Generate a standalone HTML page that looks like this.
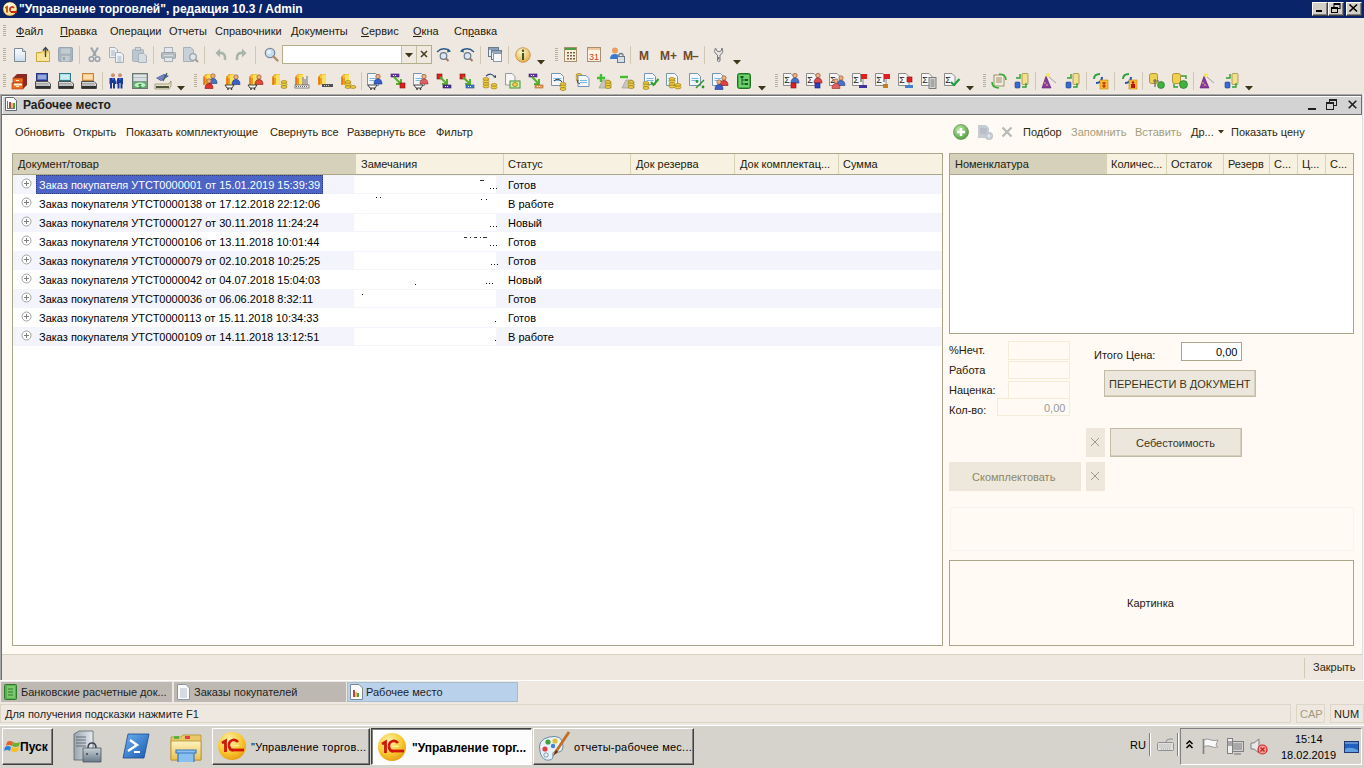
<!DOCTYPE html><html><head><meta charset="utf-8"><style>
html,body{margin:0;padding:0;width:1364px;height:768px;overflow:hidden;background:#efe8e0;}
body{position:relative;font-family:"Liberation Sans",sans-serif;font-size:11px;}
div{position:absolute;box-sizing:border-box;}
.t{white-space:nowrap;}
svg{position:absolute;overflow:visible;}
</style></head><body>
<div style="left:0px;top:0px;width:1364px;height:18px;background:#0a246a"></div>
<svg style="left:1px;top:1px" width="17" height="16" viewBox="0 0 17 16"><defs><radialGradient id="tl" cx="0.45" cy="0.25" r="0.8"><stop offset="0" stop-color="#fffbe8"/><stop offset="0.6" stop-color="#fbe7a0"/><stop offset="1" stop-color="#f2c860"/></radialGradient></defs><circle cx="9" cy="8" r="7.3" fill="url(#tl)" stroke="#0a1030" stroke-width="0.8"/><path d="M4.3 7 L6 6 V11.5" fill="none" stroke="#b84c10" stroke-width="1.8"/><path d="M13 7 Q12 5.5 10.5 6 Q8.5 7 9 9.5 Q9.5 11 11 11" fill="none" stroke="#d22a10" stroke-width="1.7"/><path d="M10 11 H15.8" stroke="#d0200c" stroke-width="1.9"/></svg>
<div class="t" style="left:19px;top:2px;font-size:12px;line-height:14px;color:#ffffff;font-weight:bold;">"Управление торговлей", редакция 10.3 / Admin</div>
<div style="left:1312px;top:2px;width:16px;height:14px;background:#d4d0c8;border-top:1px solid #fff;border-left:1px solid #fff;border-right:1px solid #404040;border-bottom:1px solid #404040;box-shadow:inset -1px -1px 0 #808080"></div>
<div style="left:1316px;top:10px;width:6px;height:2px;background:#000"></div>
<div style="left:1328px;top:2px;width:16px;height:14px;background:#d4d0c8;border-top:1px solid #fff;border-left:1px solid #fff;border-right:1px solid #404040;border-bottom:1px solid #404040;box-shadow:inset -1px -1px 0 #808080"></div>
<svg style="left:1331px;top:3px" width="10" height="10" viewBox="0 0 10 10"><rect x="3" y="0.5" width="6" height="5" fill="none" stroke="#000"/><rect x="3" y="0" width="6" height="2" fill="#000"/><rect x="0.5" y="4.5" width="6" height="5" fill="#d4d0c8" stroke="#000"/><rect x="0" y="4" width="7" height="2" fill="#000"/></svg>
<div style="left:1346px;top:2px;width:16px;height:14px;background:#d4d0c8;border-top:1px solid #fff;border-left:1px solid #fff;border-right:1px solid #404040;border-bottom:1px solid #404040;box-shadow:inset -1px -1px 0 #808080"></div>
<svg style="left:1349px;top:4px" width="9" height="8" viewBox="0 0 9 8"><path d="M0.5 0.5 L8 7.5 M8 0.5 L0.5 7.5" stroke="#000" stroke-width="1.7"/></svg>
<div style="left:3px;top:25px;width:3px;height:1px;background:#b5ae98"></div>
<div style="left:3px;top:27px;width:3px;height:1px;background:#b5ae98"></div>
<div style="left:3px;top:29px;width:3px;height:1px;background:#b5ae98"></div>
<div style="left:3px;top:31px;width:3px;height:1px;background:#b5ae98"></div>
<div style="left:3px;top:33px;width:3px;height:1px;background:#b5ae98"></div>
<div style="left:3px;top:35px;width:3px;height:1px;background:#b5ae98"></div>
<div class="t" style="left:16px;top:25px;font-size:11px;line-height:13px;color:#24200e;"><u>Ф</u>айл</div>
<div class="t" style="left:60px;top:25px;font-size:11px;line-height:13px;color:#24200e;"><u>П</u>равка</div>
<div class="t" style="left:110px;top:25px;font-size:11px;line-height:13px;color:#24200e;">Операции</div>
<div class="t" style="left:169px;top:25px;font-size:11px;line-height:13px;color:#24200e;">Отчеты</div>
<div class="t" style="left:215px;top:25px;font-size:11px;line-height:13px;color:#24200e;">Справочники</div>
<div class="t" style="left:291px;top:25px;font-size:11px;line-height:13px;color:#24200e;">Документы</div>
<div class="t" style="left:361px;top:25px;font-size:11px;line-height:13px;color:#24200e;"><u>С</u>ервис</div>
<div class="t" style="left:413px;top:25px;font-size:11px;line-height:13px;color:#24200e;"><u>О</u>кна</div>
<div class="t" style="left:454px;top:25px;font-size:11px;line-height:13px;color:#24200e;">Сп<u>р</u>авка</div>
<div style="left:3px;top:48px;width:3px;height:1px;background:#b9b29c"></div>
<div style="left:3px;top:50px;width:3px;height:1px;background:#b9b29c"></div>
<div style="left:3px;top:52px;width:3px;height:1px;background:#b9b29c"></div>
<div style="left:3px;top:54px;width:3px;height:1px;background:#b9b29c"></div>
<div style="left:3px;top:56px;width:3px;height:1px;background:#b9b29c"></div>
<div style="left:3px;top:58px;width:3px;height:1px;background:#b9b29c"></div>
<div style="left:3px;top:60px;width:3px;height:1px;background:#b9b29c"></div>
<svg style="left:14px;top:47px" width="16" height="16" viewBox="0 0 16 16"><defs><linearGradient id="nd" x1="0" y1="0" x2="0" y2="1"><stop offset="0" stop-color="#ffffff"/><stop offset="1" stop-color="#c8dcec"/></linearGradient></defs><path d="M0.5 1.5 H8.5 L11.5 4.5 V14.5 H0.5 Z" fill="url(#nd)" stroke="#7c8a96"/><path d="M8.5 1.5 V4.5 H11.5" fill="#dde4ea" stroke="#7c8a96"/></svg>
<svg style="left:36px;top:47px" width="16" height="16" viewBox="0 0 16 16"><path d="M0.5 5.5 H5 L6.5 4 H13.5 V14.5 H0.5 Z" fill="#f3d97a" stroke="#c9a640"/><rect x="1" y="7" width="12" height="7" fill="#f8e59a"/><path d="M9.5 1 V10" stroke="#3c4850" stroke-width="1.4"/><path d="M7 3.5 L9.5 0.5 L12 3.5" fill="none" stroke="#3c4850" stroke-width="1.4"/></svg>
<svg style="left:58px;top:47px" width="16" height="16" viewBox="0 0 16 16"><rect x="0.5" y="0.5" width="14" height="14" rx="1" fill="#a8b4be" stroke="#98a4ae"/><rect x="3" y="1.5" width="9" height="5" fill="#c4ccd2"/><rect x="3.5" y="9" width="8" height="5.5" fill="#c4ccd2"/><rect x="5" y="10" width="2" height="3" fill="#98a4ae"/></svg>
<div style="left:79px;top:46px;width:1px;height:18px;background:#cfc8b4"></div>
<svg style="left:88px;top:47px" width="16" height="16" viewBox="0 0 16 16"><path d="M3 0.5 L8 9 M10 0.5 L5 9" stroke="#9aa4ae" stroke-width="2"/><circle cx="3.5" cy="12" r="2.3" fill="none" stroke="#9aa4ae" stroke-width="1.6"/><circle cx="9.5" cy="12" r="2.3" fill="none" stroke="#9aa4ae" stroke-width="1.6"/></svg>
<svg style="left:109px;top:47px" width="16" height="16" viewBox="0 0 16 16"><path d="M0.5 0.5 H6 L8.5 3 V10.5 H0.5 Z" fill="#eef2f6" stroke="#a4aeb8"/><path d="M6.5 5.5 H12 L14.5 8 V15.5 H6.5 Z" fill="#eef2f6" stroke="#a4aeb8"/><path d="M2 4 H6 M2 6 H6 M2 8 H6 M8.5 10 H12.5 M8.5 12 H12.5 M8.5 14 H12.5" stroke="#a4b4c4"/></svg>
<svg style="left:132px;top:47px" width="16" height="16" viewBox="0 0 16 16"><rect x="0.5" y="2.5" width="11" height="12" rx="1" fill="#bcc6ce" stroke="#a8b2ba"/><rect x="3.5" y="0.5" width="5" height="3" fill="#d0d6dc" stroke="#a8b2ba"/><path d="M6.5 6.5 H12 L14.5 9 V15.5 H6.5 Z" fill="#d6dde2" stroke="#a8b2ba"/></svg>
<div style="left:153px;top:46px;width:1px;height:18px;background:#cfc8b4"></div>
<svg style="left:161px;top:47px" width="16" height="16" viewBox="0 0 16 16"><rect x="3.5" y="0.5" width="8" height="5" fill="#e4e8ec" stroke="#a8b0b8"/><rect x="0.5" y="5.5" width="14" height="6" rx="1" fill="#b4bcc4" stroke="#9aa2aa"/><rect x="3.5" y="10.5" width="8" height="4" fill="#e4e8ec" stroke="#a8b0b8"/><rect x="3" y="8" width="9" height="1" fill="#d8dde2"/></svg>
<svg style="left:183px;top:47px" width="16" height="16" viewBox="0 0 16 16"><path d="M0.5 0.5 H8 L10.5 3 V14.5 H0.5 Z" fill="#c8d0d8" stroke="#a8b0b8"/><circle cx="10" cy="10" r="3.3" fill="#dfe5ea" stroke="#9aa4ae" stroke-width="1.3"/><path d="M12.5 12.5 L15 15" stroke="#a89a86" stroke-width="2"/></svg>
<div style="left:204px;top:46px;width:1px;height:18px;background:#cfc8b4"></div>
<svg style="left:215px;top:47px" width="12" height="16" viewBox="0 0 12 16"><path d="M10 13 Q11 5 4 6" fill="none" stroke="#a8b4a8" stroke-width="2.6"/><path d="M0.5 6 L5 1.5 V10.5 Z" fill="#a8b4a8"/></svg>
<svg style="left:235px;top:47px" width="12" height="16" viewBox="0 0 12 16"><path d="M2 13 Q1 5 8 6" fill="none" stroke="#a8b4a8" stroke-width="2.6"/><path d="M11.5 6 L7 1.5 V10.5 Z" fill="#a8b4a8"/></svg>
<div style="left:255px;top:46px;width:1px;height:18px;background:#cfc8b4"></div>
<svg style="left:264px;top:47px" width="16" height="16" viewBox="0 0 16 16"><circle cx="6" cy="6" r="4.7" fill="#c8dcf0" stroke="#7a8a9a" stroke-width="1.3"/><circle cx="5" cy="5" r="2" fill="#e8f2fc"/><path d="M9.5 9.5 L13.5 13.5" stroke="#b08a6a" stroke-width="2.4" stroke-linecap="round"/></svg>
<div style="left:282px;top:45px;width:150px;height:19px;background:#ffffff;border:1px solid #b5ae8a"></div>
<div style="left:401px;top:46px;width:30px;height:17px;background:#efe9df"></div>
<div style="left:401px;top:46px;width:1px;height:17px;background:#c6bfa4"></div>
<div style="left:416px;top:46px;width:1px;height:17px;background:#c6bfa4"></div>
<svg style="left:405px;top:53px" width="8" height="5" viewBox="0 0 8 5"><path d="M0 0 H8 L4 4.5 Z" fill="#3e3418"/></svg>
<svg style="left:420px;top:50px" width="8" height="8" viewBox="0 0 8 8"><path d="M1 1 L7 7 M7 1 L1 7" stroke="#4a4020" stroke-width="1.6"/></svg>
<svg style="left:436px;top:47px" width="16" height="16" viewBox="0 0 16 16"><path d="M1 5 Q7 -1 14 4" fill="none" stroke="#2a5a8a" stroke-width="1.3"/><path d="M12 1.5 L15 4.5 L11 5.5 Z" fill="#2a5a8a"/><circle cx="7.5" cy="9" r="3.3" fill="#d8e6f2" stroke="#6a7a88" stroke-width="1.2"/><path d="M10 11.5 L12.5 14" stroke="#a07860" stroke-width="2"/></svg>
<svg style="left:459px;top:47px" width="16" height="16" viewBox="0 0 16 16"><path d="M15 5 Q9 -1 2 4" fill="none" stroke="#2a5a8a" stroke-width="1.3"/><path d="M4 1.5 L1 4.5 L5 5.5 Z" fill="#2a5a8a"/><circle cx="8.5" cy="9" r="3.3" fill="#d8e6f2" stroke="#6a7a88" stroke-width="1.2"/><path d="M11 11.5 L13.5 14" stroke="#a07860" stroke-width="2"/></svg>
<div style="left:480px;top:46px;width:1px;height:18px;background:#cfc8b4"></div>
<svg style="left:488px;top:47px" width="16" height="16" viewBox="0 0 16 16"><rect x="0.5" y="0.5" width="10" height="9" fill="#e8eef4" stroke="#6a7a8a"/><rect x="1" y="1" width="9" height="2" fill="#8aa0b8"/><rect x="3.5" y="3.5" width="10" height="9" fill="#eef2f6" stroke="#6a7a8a"/><rect x="4" y="4" width="9" height="2" fill="#94a8bc"/><rect x="5.5" y="6.5" width="8" height="8" fill="#f6f8fa" stroke="#8a9aaa"/></svg>
<div style="left:508px;top:46px;width:1px;height:18px;background:#cfc8b4"></div>
<svg style="left:515px;top:47px" width="16" height="16" viewBox="0 0 16 16"><defs><radialGradient id="ig" cx="0.4" cy="0.3" r="0.8"><stop offset="0" stop-color="#fff6cc"/><stop offset="1" stop-color="#e0a840"/></radialGradient></defs><circle cx="8" cy="8" r="7.3" fill="url(#ig)" stroke="#c08a3a" stroke-width="0.8"/><rect x="7" y="6" width="2" height="7" fill="#3a5a20"/><circle cx="8" cy="3.8" r="1.2" fill="#3a5a20"/></svg>
<svg style="left:537px;top:60px" width="8" height="5" viewBox="0 0 8 5"><path d="M0 0 H8 L4 4.5 Z" fill="#3e3418"/></svg>
<div style="left:555px;top:48px;width:3px;height:1px;background:#b9b29c"></div>
<div style="left:555px;top:50px;width:3px;height:1px;background:#b9b29c"></div>
<div style="left:555px;top:52px;width:3px;height:1px;background:#b9b29c"></div>
<div style="left:555px;top:54px;width:3px;height:1px;background:#b9b29c"></div>
<div style="left:555px;top:56px;width:3px;height:1px;background:#b9b29c"></div>
<div style="left:555px;top:58px;width:3px;height:1px;background:#b9b29c"></div>
<div style="left:555px;top:60px;width:3px;height:1px;background:#b9b29c"></div>
<svg style="left:564px;top:47px" width="16" height="16" viewBox="0 0 16 16"><rect x="0.5" y="0.5" width="12" height="14" fill="#f8f0dc" stroke="#a89070"/><rect x="1" y="1" width="11" height="2" fill="#4aa040"/><g fill="#7a6040"><rect x="3" y="5" width="2" height="1.5"/><rect x="6" y="5" width="2" height="1.5"/><rect x="9" y="5" width="2" height="1.5"/><rect x="3" y="8" width="2" height="1.5"/><rect x="6" y="8" width="2" height="1.5"/><rect x="9" y="8" width="2" height="1.5"/><rect x="3" y="11" width="2" height="1.5"/><rect x="6" y="11" width="2" height="1.5"/><rect x="9" y="11" width="2" height="1.5"/></g></svg>
<svg style="left:587px;top:47px" width="16" height="16" viewBox="0 0 16 16"><rect x="0.5" y="0.5" width="13" height="14" fill="#fbf4e6" stroke="#a89070"/><rect x="1" y="1" width="12" height="2" fill="#f0c8a0"/><text x="7" y="13" font-family="Liberation Sans" font-size="9" fill="#d04020" text-anchor="middle">31</text></svg>
<svg style="left:610px;top:47px" width="16" height="16" viewBox="0 0 16 16"><circle cx="5" cy="3.5" r="3" fill="#e8a060"/><path d="M0 12 Q0 7 5 7 Q9 7 9 10 V12 Z" fill="#3a7acc"/><rect x="7.5" y="9.5" width="7" height="6" fill="#d8dee6" stroke="#6a7a8a"/><path d="M9 9.5 V7.5 Q11 5.5 13 7.5 V9.5" fill="none" stroke="#6a7a8a" stroke-width="1.2"/></svg>
<div style="left:630px;top:46px;width:1px;height:18px;background:#cfc8b4"></div>
<div class="t" style="left:639px;top:49px;font-size:12px;line-height:14px;color:#6e4a2c;font-weight:bold;">M</div>
<div class="t" style="left:660px;top:49px;font-size:12px;line-height:14px;color:#6e4a2c;font-weight:bold;">M+</div>
<div class="t" style="left:683px;top:49px;font-size:12px;line-height:14px;color:#6e4a2c;font-weight:bold;letter-spacing:-1px">M–</div>
<div style="left:704px;top:46px;width:1px;height:18px;background:#cfc8b4"></div>
<svg style="left:713px;top:47px" width="12" height="16" viewBox="0 0 12 16"><path d="M2.5 1 Q0 5 3 7 L4.5 8 V14 Q5.5 15.5 7 14 V8 L8.5 7 Q11 5 9 1 L8 4 Q6 5.5 4 4 Z" fill="#e6e6e6" stroke="#7a7a7a" stroke-width="1"/><rect x="5" y="10" width="1.5" height="2.5" fill="#7a7a7a"/></svg>
<svg style="left:733px;top:60px" width="8" height="5" viewBox="0 0 8 5"><path d="M0 0 H8 L4 4.5 Z" fill="#3e3418"/></svg>
<div style="left:3px;top:74px;width:3px;height:1px;background:#b9b29c"></div>
<div style="left:3px;top:76px;width:3px;height:1px;background:#b9b29c"></div>
<div style="left:3px;top:78px;width:3px;height:1px;background:#b9b29c"></div>
<div style="left:3px;top:80px;width:3px;height:1px;background:#b9b29c"></div>
<div style="left:3px;top:82px;width:3px;height:1px;background:#b9b29c"></div>
<div style="left:3px;top:84px;width:3px;height:1px;background:#b9b29c"></div>
<div style="left:3px;top:86px;width:3px;height:1px;background:#b9b29c"></div>
<svg style="left:12px;top:73px" width="16" height="16" viewBox="0 0 16 16"><path d="M1 5 L5 1 H15 V12 L11 16 H1 Z" fill="#8a2a20"/><rect x="1" y="5" width="10" height="5" fill="#f07020" stroke="#a03010" stroke-width="0.6"/><rect x="0" y="10" width="11" height="6" fill="#f07020" stroke="#a03010" stroke-width="0.6"/><rect x="2" y="10.5" width="8" height="2" fill="#fff8e0"/><rect x="4" y="7" width="3" height="1" fill="#fff0c0"/><rect x="4" y="13" width="3" height="1" fill="#fff0c0"/></svg>
<svg style="left:35px;top:73px" width="16" height="16" viewBox="0 0 16 16"><rect x="1.5" y="0.5" width="11" height="7" fill="#5070c0" stroke="#303080"/><path d="M3 3 H11 M3 5 H11" stroke="#ffffff" stroke-width="0.8"/><path d="M0.5 8.5 H13 L15.5 11 V15.5 H0.5 Z" fill="#d8d8d8" stroke="#505050"/><rect x="1" y="13" width="14" height="2.5" fill="#303030"/><path d="M1 10.5 H13 M1 12 H14" stroke="#909090" stroke-width="0.7"/></svg>
<svg style="left:58px;top:73px" width="16" height="16" viewBox="0 0 16 16"><rect x="1.5" y="0.5" width="11" height="7" fill="#a8e0e8" stroke="#307888"/><path d="M3 3 H11 M3 5 H11" stroke="#ffffff" stroke-width="0.8"/><path d="M0.5 8.5 H13 L15.5 11 V15.5 H0.5 Z" fill="#d8d8d8" stroke="#505050"/><rect x="1" y="13" width="14" height="2.5" fill="#303030"/><path d="M1 10.5 H13 M1 12 H14" stroke="#909090" stroke-width="0.7"/></svg>
<svg style="left:81px;top:73px" width="16" height="16" viewBox="0 0 16 16"><rect x="1.5" y="0.5" width="11" height="7" fill="#f8c880" stroke="#c08840"/><path d="M3 3 H11 M3 5 H11" stroke="#ffffff" stroke-width="0.8"/><path d="M0.5 8.5 H13 L15.5 11 V15.5 H0.5 Z" fill="#d8d8d8" stroke="#505050"/><rect x="1" y="13" width="14" height="2.5" fill="#303030"/><path d="M1 10.5 H13 M1 12 H14" stroke="#909090" stroke-width="0.7"/></svg>
<div style="left:102px;top:72px;width:1px;height:18px;background:#cfc8b4"></div>
<svg style="left:109px;top:73px" width="16" height="16" viewBox="0 0 16 16"><circle cx="4" cy="2.2" r="2" fill="#c89070"/><circle cx="11" cy="2.2" r="2" fill="#c89070"/><path d="M0.5 5 H7 V11 H6 V15.5 H4 V10 H3 V15.5 H1 V11 H0.5 Z" fill="#1a3a9a"/><path d="M7.5 5 H14 V11 H13.5 V15.5 H11.5 V10 H10.5 V15.5 H8.5 V11 H7.5 Z" fill="#1a3a9a"/><path d="M6 5 L7 9 L8.5 5 Z" fill="#ffffff"/><path d="M3 5 H5 V7 H3 Z M10 5 H12 V7 H10 Z" fill="#3a5ac0"/></svg>
<svg style="left:132px;top:73px" width="16" height="16" viewBox="0 0 16 16"><rect x="0.5" y="0.5" width="15" height="15" fill="#8a9a90" stroke="#6a7a70"/><rect x="1.5" y="1.5" width="13" height="3" fill="#e0e4e8"/><rect x="1.5" y="5" width="13" height="3" fill="#d8dee4"/><rect x="1.5" y="9" width="13" height="6" fill="#60a870"/><ellipse cx="8" cy="12" rx="5.5" ry="2.6" fill="#b8f4c0"/><text x="8" y="14.5" font-family="Liberation Sans" font-size="6" font-weight="bold" fill="#207040" text-anchor="middle">$</text></svg>
<svg style="left:155px;top:73px" width="16" height="16" viewBox="0 0 16 16"><path d="M1 5 L9 1 L14 3 L6 8 Z" fill="#4a5ab0"/><g fill="#fff"><circle cx="4" cy="5" r="0.6"/><circle cx="6" cy="4" r="0.6"/><circle cx="8" cy="3" r="0.6"/><circle cx="6" cy="6" r="0.6"/><circle cx="8" cy="5" r="0.6"/><circle cx="10" cy="4" r="0.6"/></g><path d="M12 0 L8 8" stroke="#3a6a3a" stroke-width="1.4"/><path d="M0 11 H14 L16 8 V13 L14 16 H0 Z" fill="#e8e4c0" stroke="#707050" stroke-width="0.6"/><rect x="1" y="13" width="13" height="2" fill="#505040"/></svg>
<svg style="left:177px;top:86px" width="8" height="5" viewBox="0 0 8 5"><path d="M0 0 H8 L4 4.5 Z" fill="#3e3418"/></svg>
<div style="left:194px;top:74px;width:3px;height:1px;background:#b9b29c"></div>
<div style="left:194px;top:76px;width:3px;height:1px;background:#b9b29c"></div>
<div style="left:194px;top:78px;width:3px;height:1px;background:#b9b29c"></div>
<div style="left:194px;top:80px;width:3px;height:1px;background:#b9b29c"></div>
<div style="left:194px;top:82px;width:3px;height:1px;background:#b9b29c"></div>
<div style="left:194px;top:84px;width:3px;height:1px;background:#b9b29c"></div>
<div style="left:194px;top:86px;width:3px;height:1px;background:#b9b29c"></div>
<svg style="left:202px;top:73px" width="16" height="16" viewBox="0 0 16 16"><path d="M1 4 L4 1 H9 V12 H1 Z" fill="#f08a20"/><path d="M3 3 L5 1 H9 V12 H3 Z" fill="#f8c830"/><path d="M5 2 H9 V12 H5 Z" fill="#f8e060"/><path d="M2 6 H5 M2 8 H5 M2 10 H5" stroke="#c86010" stroke-width="0.8"/><circle cx="11" cy="3" r="2.2" fill="#f0b080" stroke="#7a4a2a" stroke-width="0.6"/><path d="M7 10.5 Q7 5.5 11 5.5 Q15 5.5 15 10.5 Z" fill="#4a70c0" stroke="#203a80" stroke-width="0.6"/><circle cx="7" cy="8" r="2.2" fill="#f0b080" stroke="#7a4a2a" stroke-width="0.6"/><path d="M3 15.5 Q3 10.5 7 10.5 Q11 10.5 11 15.5 Z" fill="#e03030" stroke="#801010" stroke-width="0.6"/></svg>
<svg style="left:225px;top:73px" width="16" height="16" viewBox="0 0 16 16"><path d="M1 4 L4 1 H9 V12 H1 Z" fill="#f08a20"/><path d="M3 3 L5 1 H9 V12 H3 Z" fill="#f8c830"/><path d="M5 2 H9 V12 H5 Z" fill="#f8e060"/><path d="M2 6 H5 M2 8 H5 M2 10 H5" stroke="#c86010" stroke-width="0.8"/><circle cx="11" cy="4" r="2.2" fill="#f0b080" stroke="#7a4a2a" stroke-width="0.6"/><path d="M7 11.5 Q7 6.5 11 6.5 Q15 6.5 15 11.5 Z" fill="#3a60c8" stroke="#1a3080" stroke-width="0.6"/><path d="M0 12 H9 L7 15 H2 Z" fill="#fff" stroke="#303030" stroke-width="0.9"/><circle cx="3" cy="16" r="0.9" fill="#303030"/><circle cx="6.5" cy="16" r="0.9" fill="#303030"/></svg>
<svg style="left:248px;top:73px" width="16" height="16" viewBox="0 0 16 16"><path d="M1 4 L4 1 H9 V12 H1 Z" fill="#f08a20"/><path d="M3 3 L5 1 H9 V12 H3 Z" fill="#f8c830"/><path d="M5 2 H9 V12 H5 Z" fill="#f8e060"/><path d="M2 6 H5 M2 8 H5 M2 10 H5" stroke="#c86010" stroke-width="0.8"/><circle cx="11" cy="4" r="2.2" fill="#f0b080" stroke="#7a4a2a" stroke-width="0.6"/><path d="M7 11.5 Q7 6.5 11 6.5 Q15 6.5 15 11.5 Z" fill="#e04a3a" stroke="#801a10" stroke-width="0.6"/><path d="M0 12 H9 L7 15 H2 Z" fill="#fff" stroke="#303030" stroke-width="0.9"/><circle cx="3" cy="16" r="0.9" fill="#303030"/><circle cx="6.5" cy="16" r="0.9" fill="#303030"/></svg>
<svg style="left:271px;top:73px" width="16" height="16" viewBox="0 0 16 16"><path d="M1 4 L4 1 H9 V12 H1 Z" fill="#f08a20"/><path d="M3 3 L5 1 H9 V12 H3 Z" fill="#f8c830"/><path d="M5 2 H9 V12 H5 Z" fill="#f8e060"/><path d="M2 6 H5 M2 8 H5 M2 10 H5" stroke="#c86010" stroke-width="0.8"/><ellipse cx="13" cy="9.0" rx="3" ry="1.4" fill="#f0d040" stroke="#9a7a10" stroke-width="0.7"/><ellipse cx="13" cy="11.5" rx="3" ry="1.4" fill="#f0d040" stroke="#9a7a10" stroke-width="0.7"/><ellipse cx="13" cy="14.0" rx="3" ry="1.4" fill="#f0d040" stroke="#9a7a10" stroke-width="0.7"/></svg>
<svg style="left:294px;top:73px" width="16" height="16" viewBox="0 0 16 16"><path d="M1 4 L4 1 H9 V12 H1 Z" fill="#f08a20"/><path d="M3 3 L5 1 H9 V12 H3 Z" fill="#f8c830"/><path d="M5 2 H9 V12 H5 Z" fill="#f8e060"/><path d="M2 6 H5 M2 8 H5 M2 10 H5" stroke="#c86010" stroke-width="0.8"/><path d="M9 4 V12 M11 6 V12 M13 3 V12" stroke="#8a8a8a" stroke-width="1.3"/><rect x="1" y="12" width="14" height="3" fill="#fff" stroke="#606060" stroke-width="0.8"/><path d="M2 13.5 H14" stroke="#606060" stroke-dasharray="1 1"/></svg>
<svg style="left:317px;top:73px" width="16" height="16" viewBox="0 0 16 16"><path d="M1 4 L4 1 H9 V12 H1 Z" fill="#f08a20"/><path d="M3 3 L5 1 H9 V12 H3 Z" fill="#f8c830"/><path d="M5 2 H9 V12 H5 Z" fill="#f8e060"/><path d="M2 6 H5 M2 8 H5 M2 10 H5" stroke="#c86010" stroke-width="0.8"/><rect x="5" y="11" width="11" height="3" fill="#505050"/><path d="M7 12.5 H13" stroke="#d3d3d3" stroke-dasharray="1 1"/></svg>
<svg style="left:340px;top:73px" width="16" height="16" viewBox="0 0 16 16"><path d="M1 4 L4 1 H9 V12 H1 Z" fill="#f08a20"/><path d="M3 3 L5 1 H9 V12 H3 Z" fill="#f8c830"/><path d="M5 2 H9 V12 H5 Z" fill="#f8e060"/><path d="M2 6 H5 M2 8 H5 M2 10 H5" stroke="#c86010" stroke-width="0.8"/><ellipse cx="8" cy="9.0" rx="3" ry="1.4" fill="#f0d040" stroke="#9a7a10" stroke-width="0.7"/><ellipse cx="8" cy="11.5" rx="3" ry="1.4" fill="#f0d040" stroke="#9a7a10" stroke-width="0.7"/><ellipse cx="8" cy="14.0" rx="3" ry="1.4" fill="#f0d040" stroke="#9a7a10" stroke-width="0.7"/><ellipse cx="13" cy="14.0" rx="3" ry="1.4" fill="#f0d040" stroke="#9a7a10" stroke-width="0.7"/></svg>
<div style="left:361px;top:72px;width:1px;height:18px;background:#cfc8b4"></div>
<svg style="left:367px;top:73px" width="16" height="16" viewBox="0 0 16 16"><path d="M0.5 0.5 H8.5 L11.5 3.5 V12.5 H0.5 Z" fill="#f4f8fc" stroke="#6a8aa8" stroke-width="0.9"/><path d="M2.5 5.5 H9.5 M2.5 7.5 H9.5" stroke="#6ab0d8" stroke-width="0.9"/><circle cx="11" cy="3.5" r="2.2" fill="#f0b080" stroke="#7a4a2a" stroke-width="0.6"/><path d="M7 11.0 Q7 6.0 11 6.0 Q15 6.0 15 11.0 Z" fill="#3a60c8" stroke="#1a3080" stroke-width="0.6"/><path d="M1 12 H10 L8 15 H3 Z" fill="#fff" stroke="#303030" stroke-width="0.9"/><circle cx="4" cy="16" r="0.9" fill="#303030"/><circle cx="7.5" cy="16" r="0.9" fill="#303030"/></svg>
<svg style="left:390px;top:73px" width="16" height="16" viewBox="0 0 16 16"><rect x="1" y="1" width="8" height="3" fill="#6a3ab0" stroke="#3a1a70" stroke-width="0.6"/><path d="M3 2.5 H7" stroke="#fff" stroke-dasharray="1 1"/><path d="M4 4 L11 11 M11 6 V11 H6" fill="none" stroke="#58b030" stroke-width="2"/><rect x="10" y="10" width="5" height="5" fill="#e02020" stroke="#801010" stroke-width="0.6"/></svg>
<svg style="left:413px;top:73px" width="16" height="16" viewBox="0 0 16 16"><path d="M0.5 0.5 H8.5 L11.5 3.5 V12.5 H0.5 Z" fill="#f4f8fc" stroke="#6a8aa8" stroke-width="0.9"/><path d="M2.5 5.5 H9.5 M2.5 7.5 H9.5" stroke="#6ab0d8" stroke-width="0.9"/><circle cx="11" cy="3.5" r="2.2" fill="#f0b080" stroke="#7a4a2a" stroke-width="0.6"/><path d="M7 11.0 Q7 6.0 11 6.0 Q15 6.0 15 11.0 Z" fill="#e06060" stroke="#902a2a" stroke-width="0.6"/><path d="M1 12 H10 L8 15 H3 Z" fill="#fff" stroke="#303030" stroke-width="0.9"/><circle cx="4" cy="16" r="0.9" fill="#303030"/><circle cx="7.5" cy="16" r="0.9" fill="#303030"/></svg>
<svg style="left:436px;top:73px" width="16" height="16" viewBox="0 0 16 16"><rect x="1" y="1" width="5" height="5" fill="#e02020" stroke="#801010" stroke-width="0.6"/><path d="M4 4 L11 11 M11 6 V11 H6" fill="none" stroke="#58b030" stroke-width="2"/><rect x="7" y="12" width="8" height="3" fill="#5030a0" stroke="#2a1a70" stroke-width="0.6"/><path d="M9 13.5 H13" stroke="#fff" stroke-dasharray="1 1"/></svg>
<svg style="left:459px;top:73px" width="16" height="16" viewBox="0 0 16 16"><rect x="1" y="1" width="5" height="5" fill="#e02020" stroke="#801010" stroke-width="0.6"/><path d="M4 4 L11 11 M11 6 V11 H6" fill="none" stroke="#58b030" stroke-width="2"/><rect x="7" y="12" width="8" height="3" fill="#4080d0" stroke="#204880" stroke-width="0.6"/><path d="M9 13.5 H13" stroke="#fff" stroke-dasharray="1 1"/></svg>
<svg style="left:482px;top:73px" width="16" height="16" viewBox="0 0 16 16"><ellipse cx="4" cy="6.0" rx="3" ry="1.4" fill="#f0d040" stroke="#9a7a10" stroke-width="0.7"/><ellipse cx="4" cy="8.5" rx="3" ry="1.4" fill="#f0d040" stroke="#9a7a10" stroke-width="0.7"/><ellipse cx="4" cy="11.0" rx="3" ry="1.4" fill="#f0d040" stroke="#9a7a10" stroke-width="0.7"/><ellipse cx="4" cy="13.5" rx="3" ry="1.4" fill="#f0d040" stroke="#9a7a10" stroke-width="0.7"/><ellipse cx="12" cy="12.0" rx="3" ry="1.4" fill="#f0d040" stroke="#9a7a10" stroke-width="0.7"/><ellipse cx="12" cy="14.5" rx="3" ry="1.4" fill="#f0d040" stroke="#9a7a10" stroke-width="0.7"/><path d="M4 3 Q9 -1 13 4" fill="none" stroke="#2a4a7a" stroke-width="1.2"/><path d="M11 4 L14 5 L14 2 Z" fill="#2a4a7a"/></svg>
<svg style="left:505px;top:73px" width="16" height="16" viewBox="0 0 16 16"><path d="M0.5 0.5 H7 L10 3.5 V12 H0.5 Z" fill="#f6f6f6" stroke="#909090" stroke-width="0.9"/><rect x="5" y="8" width="10" height="7" fill="#d0f0b0" stroke="#409030"/><ellipse cx="10" cy="11.5" rx="2.5" ry="2" fill="#f0d040" stroke="#806010" stroke-width="0.6"/></svg>
<svg style="left:528px;top:73px" width="16" height="16" viewBox="0 0 16 16"><rect x="1" y="1" width="8" height="3" fill="#6a3ab0" stroke="#3a1a70" stroke-width="0.6"/><path d="M3 2.5 H7" stroke="#fff" stroke-dasharray="1 1"/><path d="M4 4 L11 11 M11 6 V11 H6" fill="none" stroke="#58b030" stroke-width="2"/><rect x="7" y="12" width="8" height="3" fill="#f0a060" stroke="#a06020" stroke-width="0.6"/><path d="M9 13.5 H13" stroke="#fff" stroke-dasharray="1 1"/></svg>
<svg style="left:551px;top:73px" width="16" height="16" viewBox="0 0 16 16"><path d="M0.5 0.5 H9.5 L12.5 3.5 V12.5 H0.5 Z" fill="#f4f8fc" stroke="#6a8aa8" stroke-width="0.9"/><path d="M2.5 5.5 H10.5 M2.5 7.5 H10.5" stroke="#6ab0d8" stroke-width="0.9"/><path d="M3 8 Q7 4 11 9" fill="none" stroke="#303030" stroke-width="0.9"/><ellipse cx="12" cy="11.0" rx="3" ry="1.4" fill="#f0d040" stroke="#9a7a10" stroke-width="0.7"/><ellipse cx="12" cy="13.5" rx="3" ry="1.4" fill="#f0d040" stroke="#9a7a10" stroke-width="0.7"/><ellipse cx="12" cy="16.0" rx="3" ry="1.4" fill="#f0d040" stroke="#9a7a10" stroke-width="0.7"/></svg>
<svg style="left:574px;top:73px" width="16" height="16" viewBox="0 0 16 16"><ellipse cx="5" cy="2.0" rx="3" ry="1.4" fill="#f0d040" stroke="#9a7a10" stroke-width="0.7"/><ellipse cx="5" cy="4.5" rx="3" ry="1.4" fill="#f0d040" stroke="#9a7a10" stroke-width="0.7"/><ellipse cx="5" cy="7.0" rx="3" ry="1.4" fill="#f0d040" stroke="#9a7a10" stroke-width="0.7"/><path d="M4 2.5 H12 L15 5.5 V13.5 H4 Z" fill="#f4f8fc" stroke="#6a8aa8" stroke-width="0.9"/><path d="M6 7.5 H13 M6 9.5 H13" stroke="#6ab0d8" stroke-width="0.9"/><path d="M6 11 Q2 10 4 7" fill="none" stroke="#303030" stroke-width="0.9"/></svg>
<svg style="left:597px;top:73px" width="16" height="16" viewBox="0 0 16 16"><path d="M4 1 V9 M0 5 H8" stroke="#40c030" stroke-width="2.4"/><path d="M6 7 H12 L14 9 V15 H2 Z" fill="#c8c8c0" stroke="#909088" stroke-width="0.6"/><ellipse cx="11" cy="9.0" rx="3" ry="1.4" fill="#f0d040" stroke="#9a7a10" stroke-width="0.7"/><ellipse cx="11" cy="11.5" rx="3" ry="1.4" fill="#f0d040" stroke="#9a7a10" stroke-width="0.7"/><ellipse cx="11" cy="14.0" rx="3" ry="1.4" fill="#f0d040" stroke="#9a7a10" stroke-width="0.7"/></svg>
<svg style="left:620px;top:73px" width="16" height="16" viewBox="0 0 16 16"><path d="M0 4 H8" stroke="#40c030" stroke-width="2.4"/><path d="M6 7 H12 L14 9 V15 H2 Z" fill="#c8c8c0" stroke="#909088" stroke-width="0.6"/><ellipse cx="11" cy="9.0" rx="3" ry="1.4" fill="#f0d040" stroke="#9a7a10" stroke-width="0.7"/><ellipse cx="11" cy="11.5" rx="3" ry="1.4" fill="#f0d040" stroke="#9a7a10" stroke-width="0.7"/><ellipse cx="11" cy="14.0" rx="3" ry="1.4" fill="#f0d040" stroke="#9a7a10" stroke-width="0.7"/></svg>
<svg style="left:643px;top:73px" width="16" height="16" viewBox="0 0 16 16"><path d="M1.5 0.5 H9.5 L12.5 3.5 V11.5 H1.5 Z" fill="#f4f8fc" stroke="#6a8aa8" stroke-width="0.9"/><path d="M3.5 5.5 H10.5 M3.5 7.5 H10.5" stroke="#6ab0d8" stroke-width="0.9"/><ellipse cx="3" cy="10.0" rx="3" ry="1.4" fill="#f0d040" stroke="#9a7a10" stroke-width="0.7"/><ellipse cx="3" cy="12.5" rx="3" ry="1.4" fill="#f0d040" stroke="#9a7a10" stroke-width="0.7"/><ellipse cx="3" cy="15.0" rx="3" ry="1.4" fill="#f0d040" stroke="#9a7a10" stroke-width="0.7"/><path d="M8 9 L10.5 12 L15.5 6" fill="none" stroke="#30a030" stroke-width="2"/></svg>
<svg style="left:666px;top:73px" width="16" height="16" viewBox="0 0 16 16"><path d="M0.5 0.5 H8.5 L11.5 3.5 V12.5 H0.5 Z" fill="#f4f8fc" stroke="#6a8aa8" stroke-width="0.9"/><path d="M2.5 5.5 H9.5 M2.5 7.5 H9.5" stroke="#6ab0d8" stroke-width="0.9"/><ellipse cx="6" cy="6.0" rx="3" ry="1.4" fill="#f0d040" stroke="#9a7a10" stroke-width="0.7"/><ellipse cx="6" cy="8.5" rx="3" ry="1.4" fill="#f0d040" stroke="#9a7a10" stroke-width="0.7"/><ellipse cx="6" cy="11.0" rx="3" ry="1.4" fill="#f0d040" stroke="#9a7a10" stroke-width="0.7"/><ellipse cx="6" cy="13.5" rx="3" ry="1.4" fill="#f0d040" stroke="#9a7a10" stroke-width="0.7"/><ellipse cx="12" cy="12.0" rx="3" ry="1.4" fill="#f0d040" stroke="#9a7a10" stroke-width="0.7"/><ellipse cx="12" cy="14.5" rx="3" ry="1.4" fill="#f0d040" stroke="#9a7a10" stroke-width="0.7"/></svg>
<svg style="left:689px;top:73px" width="16" height="16" viewBox="0 0 16 16"><path d="M0.5 0.5 H8.5 L11.5 3.5 V12.5 H0.5 Z" fill="#f4f8fc" stroke="#6a8aa8" stroke-width="0.9"/><path d="M2.5 5.5 H9.5 M2.5 7.5 H9.5" stroke="#6ab0d8" stroke-width="0.9"/><path d="M7 15 L15 7" stroke="#309030" stroke-width="1.4"/><circle cx="8" cy="8.5" r="1.4" fill="#309030"/><circle cx="14" cy="14" r="1.4" fill="#309030"/></svg>
<svg style="left:712px;top:73px" width="16" height="16" viewBox="0 0 16 16"><path d="M0.5 0.5 H8.5 L11.5 3.5 V12.5 H0.5 Z" fill="#f4f8fc" stroke="#6a8aa8" stroke-width="0.9"/><path d="M2.5 5.5 H9.5 M2.5 7.5 H9.5" stroke="#6ab0d8" stroke-width="0.9"/><circle cx="12" cy="5" r="2.2" fill="#f0b080" stroke="#7a4a2a" stroke-width="0.6"/><path d="M8 12.5 Q8 7.5 12 7.5 Q16 7.5 16 12.5 Z" fill="#e04040" stroke="#801a1a" stroke-width="0.6"/><circle cx="7" cy="9" r="2.2" fill="#f0b080" stroke="#7a4a2a" stroke-width="0.6"/><path d="M3 16.5 Q3 11.5 7 11.5 Q11 11.5 11 16.5 Z" fill="#3a60c8" stroke="#1a3080" stroke-width="0.6"/></svg>
<svg style="left:737px;top:73px" width="14" height="16" viewBox="0 0 14 16"><rect x="0.5" y="0.5" width="13" height="15" rx="2" fill="#40b040" stroke="#207020"/><rect x="2" y="2" width="10" height="12" fill="#70d070"/><path d="M5 4 V12 M5 7 H9 M5 11 H9" stroke="#1a5a1a" stroke-width="1"/><rect x="3.5" y="3" width="3" height="2" fill="#1a5a1a"/><rect x="8" y="6" width="3" height="2" fill="#1a5a1a"/><rect x="8" y="10" width="3" height="2" fill="#1a5a1a"/></svg>
<svg style="left:758px;top:86px" width="8" height="5" viewBox="0 0 8 5"><path d="M0 0 H8 L4 4.5 Z" fill="#3e3418"/></svg>
<div style="left:775px;top:74px;width:3px;height:1px;background:#b9b29c"></div>
<div style="left:775px;top:76px;width:3px;height:1px;background:#b9b29c"></div>
<div style="left:775px;top:78px;width:3px;height:1px;background:#b9b29c"></div>
<div style="left:775px;top:80px;width:3px;height:1px;background:#b9b29c"></div>
<div style="left:775px;top:82px;width:3px;height:1px;background:#b9b29c"></div>
<div style="left:775px;top:84px;width:3px;height:1px;background:#b9b29c"></div>
<div style="left:775px;top:86px;width:3px;height:1px;background:#b9b29c"></div>
<svg style="left:783px;top:73px" width="16" height="16" viewBox="0 0 16 16"><path d="M0.5 0.5 H8 L11 3.5 V12.5 H0.5 Z" fill="#f6f6f6" stroke="#808080" stroke-width="0.9"/><text x="1.2" y="10" font-family="Liberation Sans" font-size="9" fill="#202020">Σ</text><circle cx="12" cy="2.5" r="2.2" fill="#f0b080" stroke="#7a4a2a" stroke-width="0.6"/><path d="M8 10.0 Q8 5.0 12 5.0 Q16 5.0 16 10.0 Z" fill="#4a70c8" stroke="#203a80" stroke-width="0.6"/><rect x="8" y="10" width="5" height="5" fill="#e02020" stroke="#801010" stroke-width="0.6"/></svg>
<svg style="left:806px;top:73px" width="16" height="16" viewBox="0 0 16 16"><path d="M0.5 0.5 H8 L11 3.5 V12.5 H0.5 Z" fill="#f6f6f6" stroke="#808080" stroke-width="0.9"/><text x="1.2" y="10" font-family="Liberation Sans" font-size="9" fill="#202020">Σ</text><circle cx="12" cy="2.5" r="2.2" fill="#f0b080" stroke="#7a4a2a" stroke-width="0.6"/><path d="M8 10.0 Q8 5.0 12 5.0 Q16 5.0 16 10.0 Z" fill="#e04a4a" stroke="#801a1a" stroke-width="0.6"/><rect x="9" y="10" width="5" height="5" fill="#3040c0" stroke="#102080" stroke-width="0.6"/></svg>
<svg style="left:829px;top:73px" width="16" height="16" viewBox="0 0 16 16"><path d="M0.5 0.5 H8 L11 3.5 V12.5 H0.5 Z" fill="#f6f6f6" stroke="#808080" stroke-width="0.9"/><text x="1.2" y="10" font-family="Liberation Sans" font-size="9" fill="#202020">Σ</text><circle cx="12" cy="5" r="2.2" fill="#f0b080" stroke="#7a4a2a" stroke-width="0.6"/><path d="M8 12.5 Q8 7.5 12 7.5 Q16 7.5 16 12.5 Z" fill="#4a70c8" stroke="#203a80" stroke-width="0.6"/><circle cx="7" cy="8" r="2.2" fill="#f0b080" stroke="#7a4a2a" stroke-width="0.6"/><path d="M3 15.5 Q3 10.5 7 10.5 Q11 10.5 11 15.5 Z" fill="#e06060" stroke="#902a2a" stroke-width="0.6"/></svg>
<svg style="left:852px;top:73px" width="16" height="16" viewBox="0 0 16 16"><path d="M0.5 0.5 H8 L11 3.5 V12.5 H0.5 Z" fill="#f6f6f6" stroke="#808080" stroke-width="0.9"/><text x="1.2" y="10" font-family="Liberation Sans" font-size="9" fill="#202020">Σ</text><path d="M9 1 V9" stroke="#404040"/><rect x="9" y="1" width="6" height="5" fill="#e02020"/><rect x="7" y="12" width="8" height="3" fill="#4030a0"/></svg>
<svg style="left:875px;top:73px" width="16" height="16" viewBox="0 0 16 16"><path d="M0.5 0.5 H8 L11 3.5 V12.5 H0.5 Z" fill="#f6f6f6" stroke="#808080" stroke-width="0.9"/><text x="1.2" y="10" font-family="Liberation Sans" font-size="9" fill="#202020">Σ</text><path d="M9 1 V9" stroke="#404040"/><rect x="9" y="1" width="6" height="5" fill="#e02020"/><rect x="8" y="11" width="5" height="4" fill="#c08020"/></svg>
<svg style="left:898px;top:73px" width="16" height="16" viewBox="0 0 16 16"><path d="M0.5 0.5 H8 L11 3.5 V12.5 H0.5 Z" fill="#f6f6f6" stroke="#808080" stroke-width="0.9"/><text x="1.2" y="10" font-family="Liberation Sans" font-size="9" fill="#202020">Σ</text><rect x="9" y="4" width="5" height="5" fill="#e02020" stroke="#801010" stroke-width="0.6"/><rect x="7" y="12" width="8" height="3" fill="#4080d0"/></svg>
<svg style="left:921px;top:73px" width="16" height="16" viewBox="0 0 16 16"><path d="M0.5 0.5 H8 L11 3.5 V12.5 H0.5 Z" fill="#f6f6f6" stroke="#808080" stroke-width="0.9"/><text x="1.2" y="10" font-family="Liberation Sans" font-size="9" fill="#202020">Σ</text><rect x="8" y="4.5" width="7" height="11" fill="#d8d8d8" stroke="#606060" stroke-width="0.8"/><path d="M9.5 7 H13.5 M9.5 9 H13.5 M9.5 11 H13.5 M9.5 13 H13.5" stroke="#606060" stroke-width="0.8"/></svg>
<svg style="left:944px;top:73px" width="16" height="16" viewBox="0 0 16 16"><path d="M0.5 0.5 H8 L11 3.5 V12.5 H0.5 Z" fill="#f6f6f6" stroke="#808080" stroke-width="0.9"/><text x="1.2" y="10" font-family="Liberation Sans" font-size="9" fill="#202020">Σ</text><path d="M7 9 L10 12 L15.5 6" fill="none" stroke="#20a040" stroke-width="2.2"/></svg>
<svg style="left:966px;top:86px" width="8" height="5" viewBox="0 0 8 5"><path d="M0 0 H8 L4 4.5 Z" fill="#3e3418"/></svg>
<div style="left:983px;top:74px;width:3px;height:1px;background:#b9b29c"></div>
<div style="left:983px;top:76px;width:3px;height:1px;background:#b9b29c"></div>
<div style="left:983px;top:78px;width:3px;height:1px;background:#b9b29c"></div>
<div style="left:983px;top:80px;width:3px;height:1px;background:#b9b29c"></div>
<div style="left:983px;top:82px;width:3px;height:1px;background:#b9b29c"></div>
<div style="left:983px;top:84px;width:3px;height:1px;background:#b9b29c"></div>
<div style="left:983px;top:86px;width:3px;height:1px;background:#b9b29c"></div>
<svg style="left:991px;top:73px" width="16" height="16" viewBox="0 0 16 16"><rect x="3" y="2" width="10" height="11" fill="#f4ecdc" stroke="#8a7a5a" stroke-width="0.8"/><path d="M5 5 H11 M5 7 H11 M5 9 H11" stroke="#8a7a5a" stroke-width="0.8"/><path d="M1 9 Q1 15 8 15" fill="none" stroke="#30b030" stroke-width="1.6"/><path d="M15 7 Q15 1 8 1" fill="none" stroke="#30b030" stroke-width="1.6"/></svg>
<svg style="left:1014px;top:73px" width="16" height="16" viewBox="0 0 16 16"><rect x="8" y="0.5" width="6" height="11" rx="1" fill="#f0e090" stroke="#a09040" stroke-width="0.8"/><rect x="1" y="9" width="5" height="6" rx="1" fill="#3a6ad0" stroke="#1a3a90" stroke-width="0.6"/><path d="M6 1 V5 H2" fill="none" stroke="#30a030" stroke-width="1.4"/><path d="M8 14 H12 V10" fill="none" stroke="#30a030" stroke-width="1.4"/></svg>
<div style="left:1035px;top:72px;width:1px;height:18px;background:#cfc8b4"></div>
<svg style="left:1041px;top:73px" width="16" height="16" viewBox="0 0 16 16"><path d="M1 15 L5 3 L10 15 Z" fill="#8a3aa0" stroke="#5a1a70" stroke-width="0.6"/><circle cx="4" cy="10" r="0.8" fill="#f0d060"/><circle cx="6" cy="12" r="0.8" fill="#f0d060"/><path d="M8 4 L15 10" stroke="#a0a0a0" stroke-width="1"/><path d="M7 0 L8 3 L11 2 L9 4.5 L11 7 L8 6 L7 9 L6 6 L3 7 L5 4.5 L3 2 L6 3 Z" fill="#f8e060" transform="translate(2 -1) scale(0.7)"/></svg>
<svg style="left:1065px;top:73px" width="16" height="16" viewBox="0 0 16 16"><rect x="8" y="0.5" width="6" height="11" rx="1" fill="#f0e090" stroke="#a09040" stroke-width="0.8"/><rect x="1" y="9" width="5" height="6" rx="1" fill="#3a6ad0" stroke="#1a3a90" stroke-width="0.6"/><path d="M6 1 V5 H2" fill="none" stroke="#30a030" stroke-width="1.4"/><path d="M8 14 H12 V10" fill="none" stroke="#30a030" stroke-width="1.4"/></svg>
<div style="left:1086px;top:72px;width:1px;height:18px;background:#cfc8b4"></div>
<svg style="left:1092px;top:73px" width="16" height="16" viewBox="0 0 16 16"><path d="M2 6 Q2 1 8 1" fill="none" stroke="#30a040" stroke-width="2"/><path d="M10 4 Q10 10 4 10" fill="none" stroke="#2050b0" stroke-width="2"/><rect x="8" y="7" width="8" height="9" fill="#f8c030" stroke="#c08010" stroke-width="0.6"/><path d="M10 10 H14 M12 9 V15 M10 13 H14" stroke="#d02010" stroke-width="1.2"/></svg>
<div style="left:1114px;top:72px;width:1px;height:18px;background:#cfc8b4"></div>
<svg style="left:1121px;top:73px" width="16" height="16" viewBox="0 0 16 16"><path d="M2 6 Q2 1 8 1" fill="none" stroke="#30a040" stroke-width="2"/><path d="M10 4 Q10 10 4 10" fill="none" stroke="#2050b0" stroke-width="2"/><rect x="8" y="7" width="8" height="9" fill="#f8c030" stroke="#c08010" stroke-width="0.6"/><circle cx="12" cy="9.5" r="1.3" fill="#c01010"/><path d="M10 15 V11 H14 V15" fill="#c01010"/></svg>
<div style="left:1142px;top:72px;width:1px;height:18px;background:#cfc8b4"></div>
<svg style="left:1149px;top:73px" width="16" height="16" viewBox="0 0 16 16"><rect x="0.5" y="0.5" width="8" height="10" rx="2" fill="#f0d050" stroke="#a08020" stroke-width="0.8"/><path d="M6 6 V14 M4 8 H10" stroke="#606060" stroke-width="1.2"/><circle cx="12" cy="12" r="3.5" fill="#40b040" stroke="#207020" stroke-width="0.6"/></svg>
<svg style="left:1172px;top:73px" width="16" height="16" viewBox="0 0 16 16"><rect x="0.5" y="0.5" width="8" height="10" rx="2" fill="#f0d050" stroke="#a08020" stroke-width="0.8"/><path d="M9 3 H14 V6 M6 14 H2 V11" fill="none" stroke="#30a030" stroke-width="1.4"/><circle cx="11.5" cy="11.5" r="4" fill="#40b040" stroke="#207020" stroke-width="0.6"/></svg>
<div style="left:1193px;top:72px;width:1px;height:18px;background:#cfc8b4"></div>
<svg style="left:1199px;top:73px" width="16" height="16" viewBox="0 0 16 16"><path d="M1 15 L5 3 L10 15 Z" fill="#8a3aa0" stroke="#5a1a70" stroke-width="0.6"/><circle cx="4" cy="10" r="0.8" fill="#f0d060"/><circle cx="6" cy="12" r="0.8" fill="#f0d060"/><path d="M8 4 L15 10" stroke="#a0a0a0" stroke-width="1"/><path d="M7 0 L8 3 L11 2 L9 4.5 L11 7 L8 6 L7 9 L6 6 L3 7 L5 4.5 L3 2 L6 3 Z" fill="#f8e060" transform="translate(2 -1) scale(0.7)"/></svg>
<svg style="left:1224px;top:73px" width="16" height="16" viewBox="0 0 16 16"><rect x="8" y="0.5" width="6" height="11" rx="1" fill="#f0e090" stroke="#a09040" stroke-width="0.8"/><rect x="1" y="9" width="5" height="6" rx="1" fill="#3a6ad0" stroke="#1a3a90" stroke-width="0.6"/><path d="M6 1 V5 H2" fill="none" stroke="#30a030" stroke-width="1.4"/><path d="M8 14 H12 V10" fill="none" stroke="#30a030" stroke-width="1.4"/></svg>
<svg style="left:1245px;top:86px" width="8" height="5" viewBox="0 0 8 5"><path d="M0 0 H8 L4 4.5 Z" fill="#3e3418"/></svg>
<div style="left:0px;top:94px;width:1362px;height:1px;background:#a8a8a8"></div>
<div style="left:0px;top:95px;width:1362px;height:1px;background:#6e6e6e"></div>
<div style="left:0px;top:94px;width:1px;height:586px;background:#a8a8a8"></div>
<div style="left:1px;top:95px;width:1px;height:585px;background:#6e6e6e"></div>
<div style="left:2px;top:96px;width:1360px;height:1px;background:#ffffff"></div>
<div style="left:2px;top:96px;width:1px;height:18px;background:#ffffff"></div>
<div style="left:3px;top:97px;width:1358px;height:17px;background:#d3d3d3"></div>
<div style="left:1361px;top:96px;width:1px;height:19px;background:#6e6e6e"></div>
<div style="left:2px;top:114px;width:1360px;height:1px;background:#6e6e6e"></div>
<svg style="left:5px;top:97px" width="12" height="14" viewBox="0 0 12 14"><path d="M0.5 0.5 H8.5 L11.5 3.5 V13.5 H0.5 Z" fill="#fff" stroke="#5d6b76"/><rect x="2" y="4" width="1" height="7" fill="#c05050"/><rect x="4" y="5" width="2" height="6" fill="#a84848"/><rect x="6" y="6" width="2" height="5" fill="#e0c060"/><rect x="8" y="6" width="2" height="5" fill="#50a040"/><rect x="2" y="11" width="8" height="1" fill="#707070"/></svg>
<div class="t" style="left:23px;top:98px;font-size:12px;line-height:14px;color:#202020;font-weight:bold;">Рабочее место</div>
<div style="left:1308px;top:108px;width:8px;height:2px;background:#202020"></div>
<svg style="left:1326px;top:99px" width="11" height="11" viewBox="0 0 11 11"><rect x="3.5" y="0.5" width="7" height="6" fill="none" stroke="#202020"/><rect x="3" y="0" width="8" height="2" fill="#202020"/><rect x="0.5" y="3.5" width="7" height="7" fill="#d3d3d3" stroke="#202020"/><rect x="0" y="3" width="8" height="2" fill="#202020"/></svg>
<svg style="left:1348px;top:100px" width="9" height="9" viewBox="0 0 9 9"><path d="M0.7 0.7 L8.3 8.3 M8.3 0.7 L0.7 8.3" stroke="#202020" stroke-width="1.6"/></svg>
<div style="left:1362px;top:94px;width:1px;height:587px;background:#dedede"></div>
<div style="left:1363px;top:94px;width:1px;height:587px;background:#f6f6f6"></div>
<div style="left:2px;top:115px;width:1360px;height:539px;background:#fffaf3"></div>
<div style="left:2px;top:654px;width:1360px;height:1px;background:#d8d2bc"></div>
<div style="left:2px;top:655px;width:1360px;height:25px;background:#efe8e0"></div>
<div class="t" style="left:15px;top:126px;font-size:11px;line-height:13px;color:#2e2810;">Обновить</div>
<div class="t" style="left:73px;top:126px;font-size:11px;line-height:13px;color:#2e2810;">Открыть</div>
<div class="t" style="left:126px;top:126px;font-size:11px;line-height:13px;color:#2e2810;">Показать комплектующие</div>
<div class="t" style="left:270px;top:126px;font-size:11px;line-height:13px;color:#2e2810;">Свернуть все</div>
<div class="t" style="left:347px;top:126px;font-size:11px;line-height:13px;color:#2e2810;">Развернуть все</div>
<div class="t" style="left:436px;top:126px;font-size:11px;line-height:13px;color:#2e2810;">Фильтр</div>
<div style="left:12px;top:153px;width:931px;height:493px;background:#ffffff;border:1px solid #aba58a"></div>
<div style="left:13px;top:154px;width:929px;height:20px;background:#f6f1e1"></div>
<div style="left:13px;top:154px;width:343px;height:20px;background:#d5d1bb"></div>
<div style="left:13px;top:174px;width:929px;height:1px;background:#aba58a"></div>
<div style="left:355px;top:154px;width:1px;height:20px;background:#d9d3b6"></div>
<div style="left:503px;top:154px;width:1px;height:20px;background:#d9d3b6"></div>
<div style="left:630px;top:154px;width:1px;height:20px;background:#d9d3b6"></div>
<div style="left:734px;top:154px;width:1px;height:20px;background:#d9d3b6"></div>
<div style="left:838px;top:154px;width:1px;height:20px;background:#d9d3b6"></div>
<div class="t" style="left:18px;top:158px;font-size:11px;line-height:13px;color:#24200e;">Документ/товар</div>
<div class="t" style="left:361px;top:158px;font-size:11px;line-height:13px;color:#24200e;">Замечания</div>
<div class="t" style="left:508px;top:158px;font-size:11px;line-height:13px;color:#24200e;">Статус</div>
<div class="t" style="left:636px;top:158px;font-size:11px;line-height:13px;color:#24200e;">Док резерва</div>
<div class="t" style="left:740px;top:158px;font-size:11px;line-height:13px;color:#24200e;">Док комплектац...</div>
<div class="t" style="left:843px;top:158px;font-size:11px;line-height:13px;color:#24200e;">Сумма</div>
<div style="left:13px;top:175px;width:929px;height:19px;background:#f3f4fc"></div>
<div style="left:354px;top:176px;width:142px;height:17px;background:#ffffff"></div>
<svg style="left:21px;top:178px" width="11" height="11" viewBox="0 0 11 11"><circle cx="5.5" cy="5.5" r="4.5" fill="#fff" stroke="#a0a0a0"/><path d="M3 5.5 H8 M5.5 3 V8" stroke="#808080"/></svg>
<div style="left:36px;top:175px;width:287px;height:19px;background:#4b64c6;outline:1px dotted #2a3a80;outline-offset:-1px"></div>
<div class="t" style="left:39px;top:179px;font-size:11px;line-height:13px;color:#ffffff;">Заказ покупателя УТСТ0000001 от 15.01.2019 15:39:39</div>
<div class="t" style="left:508px;top:179px;font-size:11px;line-height:13px;color:#000000;">Готов</div>
<svg style="left:21px;top:197px" width="11" height="11" viewBox="0 0 11 11"><circle cx="5.5" cy="5.5" r="4.5" fill="#fff" stroke="#a0a0a0"/><path d="M3 5.5 H8 M5.5 3 V8" stroke="#808080"/></svg>
<div class="t" style="left:39px;top:198px;font-size:11px;line-height:13px;color:#000000;">Заказ покупателя УТСТ0000138 от 17.12.2018 22:12:06</div>
<div class="t" style="left:508px;top:198px;font-size:11px;line-height:13px;color:#000000;">В работе</div>
<div style="left:13px;top:213px;width:929px;height:19px;background:#f3f4fc"></div>
<div style="left:354px;top:214px;width:142px;height:17px;background:#ffffff"></div>
<svg style="left:21px;top:216px" width="11" height="11" viewBox="0 0 11 11"><circle cx="5.5" cy="5.5" r="4.5" fill="#fff" stroke="#a0a0a0"/><path d="M3 5.5 H8 M5.5 3 V8" stroke="#808080"/></svg>
<div class="t" style="left:39px;top:217px;font-size:11px;line-height:13px;color:#000000;">Заказ покупателя УТСТ0000127 от 30.11.2018 11:24:24</div>
<div class="t" style="left:508px;top:217px;font-size:11px;line-height:13px;color:#000000;">Новый</div>
<svg style="left:21px;top:235px" width="11" height="11" viewBox="0 0 11 11"><circle cx="5.5" cy="5.5" r="4.5" fill="#fff" stroke="#a0a0a0"/><path d="M3 5.5 H8 M5.5 3 V8" stroke="#808080"/></svg>
<div class="t" style="left:39px;top:236px;font-size:11px;line-height:13px;color:#000000;">Заказ покупателя УТСТ0000106 от 13.11.2018 10:01:44</div>
<div class="t" style="left:508px;top:236px;font-size:11px;line-height:13px;color:#000000;">Готов</div>
<div style="left:13px;top:251px;width:929px;height:19px;background:#f3f4fc"></div>
<div style="left:354px;top:252px;width:142px;height:17px;background:#ffffff"></div>
<svg style="left:21px;top:254px" width="11" height="11" viewBox="0 0 11 11"><circle cx="5.5" cy="5.5" r="4.5" fill="#fff" stroke="#a0a0a0"/><path d="M3 5.5 H8 M5.5 3 V8" stroke="#808080"/></svg>
<div class="t" style="left:39px;top:255px;font-size:11px;line-height:13px;color:#000000;">Заказ покупателя УТСТ0000079 от 02.10.2018 10:25:25</div>
<div class="t" style="left:508px;top:255px;font-size:11px;line-height:13px;color:#000000;">Готов</div>
<svg style="left:21px;top:273px" width="11" height="11" viewBox="0 0 11 11"><circle cx="5.5" cy="5.5" r="4.5" fill="#fff" stroke="#a0a0a0"/><path d="M3 5.5 H8 M5.5 3 V8" stroke="#808080"/></svg>
<div class="t" style="left:39px;top:274px;font-size:11px;line-height:13px;color:#000000;">Заказ покупателя УТСТ0000042 от 04.07.2018 15:04:03</div>
<div class="t" style="left:508px;top:274px;font-size:11px;line-height:13px;color:#000000;">Новый</div>
<div style="left:13px;top:289px;width:929px;height:19px;background:#f3f4fc"></div>
<div style="left:354px;top:290px;width:142px;height:17px;background:#ffffff"></div>
<svg style="left:21px;top:292px" width="11" height="11" viewBox="0 0 11 11"><circle cx="5.5" cy="5.5" r="4.5" fill="#fff" stroke="#a0a0a0"/><path d="M3 5.5 H8 M5.5 3 V8" stroke="#808080"/></svg>
<div class="t" style="left:39px;top:293px;font-size:11px;line-height:13px;color:#000000;">Заказ покупателя УТСТ0000036 от 06.06.2018 8:32:11</div>
<div class="t" style="left:508px;top:293px;font-size:11px;line-height:13px;color:#000000;">Готов</div>
<svg style="left:21px;top:311px" width="11" height="11" viewBox="0 0 11 11"><circle cx="5.5" cy="5.5" r="4.5" fill="#fff" stroke="#a0a0a0"/><path d="M3 5.5 H8 M5.5 3 V8" stroke="#808080"/></svg>
<div class="t" style="left:39px;top:312px;font-size:11px;line-height:13px;color:#000000;">Заказ покупателя УТСТ0000113 от 15.11.2018 10:34:33</div>
<div class="t" style="left:508px;top:312px;font-size:11px;line-height:13px;color:#000000;">Готов</div>
<div style="left:13px;top:327px;width:929px;height:19px;background:#f3f4fc"></div>
<div style="left:354px;top:328px;width:142px;height:17px;background:#ffffff"></div>
<svg style="left:21px;top:330px" width="11" height="11" viewBox="0 0 11 11"><circle cx="5.5" cy="5.5" r="4.5" fill="#fff" stroke="#a0a0a0"/><path d="M3 5.5 H8 M5.5 3 V8" stroke="#808080"/></svg>
<div class="t" style="left:39px;top:331px;font-size:11px;line-height:13px;color:#000000;">Заказ покупателя УТСТ0000109 от 14.11.2018 13:12:51</div>
<div class="t" style="left:508px;top:331px;font-size:11px;line-height:13px;color:#000000;">В работе</div>
<div style="left:490px;top:188px;width:1px;height:1px;background:#101010"></div>
<div style="left:493px;top:188px;width:1px;height:1px;background:#101010"></div>
<div style="left:496px;top:188px;width:1px;height:1px;background:#101010"></div>
<div style="left:480px;top:180px;width:4px;height:1px;background:#303030"></div>
<div style="left:376px;top:197px;width:1px;height:1px;background:#101010"></div>
<div style="left:380px;top:197px;width:1px;height:1px;background:#101010"></div>
<div style="left:481px;top:199px;width:1px;height:1px;background:#101010"></div>
<div style="left:486px;top:199px;width:1px;height:1px;background:#101010"></div>
<div style="left:490px;top:226px;width:1px;height:1px;background:#101010"></div>
<div style="left:493px;top:226px;width:1px;height:1px;background:#101010"></div>
<div style="left:496px;top:226px;width:1px;height:1px;background:#101010"></div>
<div style="left:490px;top:245px;width:1px;height:1px;background:#101010"></div>
<div style="left:493px;top:245px;width:1px;height:1px;background:#101010"></div>
<div style="left:496px;top:245px;width:1px;height:1px;background:#101010"></div>
<div style="left:464px;top:237px;width:3px;height:1px;background:#303030"></div>
<div style="left:470px;top:237px;width:1px;height:1px;background:#303030"></div>
<div style="left:474px;top:237px;width:3px;height:1px;background:#303030"></div>
<div style="left:480px;top:237px;width:1px;height:1px;background:#303030"></div>
<div style="left:483px;top:237px;width:4px;height:1px;background:#303030"></div>
<div style="left:491px;top:264px;width:1px;height:1px;background:#101010"></div>
<div style="left:494px;top:264px;width:1px;height:1px;background:#101010"></div>
<div style="left:497px;top:264px;width:1px;height:1px;background:#101010"></div>
<div style="left:415px;top:284px;width:1px;height:1px;background:#101010"></div>
<div style="left:486px;top:283px;width:1px;height:1px;background:#101010"></div>
<div style="left:489px;top:283px;width:1px;height:1px;background:#101010"></div>
<div style="left:492px;top:283px;width:1px;height:1px;background:#101010"></div>
<div style="left:362px;top:294px;width:1px;height:1px;background:#101010"></div>
<div style="left:495px;top:321px;width:1px;height:1px;background:#101010"></div>
<div style="left:495px;top:340px;width:1px;height:1px;background:#101010"></div>
<svg style="left:953px;top:124px" width="16" height="16" viewBox="0 0 16 16"><defs><radialGradient id="gg" cx="0.4" cy="0.35" r="0.7"><stop offset="0" stop-color="#c8ecb0"/><stop offset="1" stop-color="#4a9a3a"/></radialGradient></defs><circle cx="8" cy="8" r="7.5" fill="url(#gg)" stroke="#6a9a5a" stroke-width="0.8"/><path d="M8 4 V12 M4 8 H12" stroke="#fff" stroke-width="2.4"/></svg>
<svg style="left:977px;top:124px" width="16" height="16" viewBox="0 0 16 16"><path d="M1 1 H9 L12 4 V14 H1 Z" fill="#c8ccd4"/><path d="M3 5 H10 M3 7 H10 M3 9 H9" stroke="#aab0ba"/><circle cx="12" cy="12" r="4" fill="#c0c6ce"/><path d="M12 9.5 V14.5 M9.5 12 H14.5" stroke="#e8ecf0" stroke-width="1.2"/></svg>
<svg style="left:1001px;top:126px" width="12" height="12" viewBox="0 0 12 12"><path d="M1.5 1.5 L10.5 10.5 M10.5 1.5 L1.5 10.5" stroke="#b8b8b8" stroke-width="2.2"/></svg>
<div class="t" style="left:1023px;top:126px;font-size:11px;line-height:13px;color:#2e2810;">Подбор</div>
<div class="t" style="left:1071px;top:126px;font-size:11px;line-height:13px;color:#a39e7c;">Запомнить</div>
<div class="t" style="left:1135px;top:126px;font-size:11px;line-height:13px;color:#a39e7c;">Вставить</div>
<div class="t" style="left:1191px;top:126px;font-size:11px;line-height:13px;color:#2e2810;">Др...</div>
<svg style="left:1218px;top:130px" width="6" height="4" viewBox="0 0 6 4"><path d="M0 0 H6 L3 3.5 Z" fill="#3a3418"/></svg>
<div class="t" style="left:1231px;top:126px;font-size:11px;line-height:13px;color:#2e2810;">Показать цену</div>
<div style="left:949px;top:153px;width:405px;height:181px;background:#ffffff;border:1px solid #aba58a"></div>
<div style="left:950px;top:154px;width:403px;height:20px;background:#f6f1e1"></div>
<div style="left:950px;top:154px;width:156px;height:20px;background:#d5d1bb"></div>
<div style="left:950px;top:174px;width:403px;height:1px;background:#aba58a"></div>
<div style="left:1106px;top:154px;width:1px;height:20px;background:#d9d3b6"></div>
<div style="left:1166px;top:154px;width:1px;height:20px;background:#d9d3b6"></div>
<div style="left:1223px;top:154px;width:1px;height:20px;background:#d9d3b6"></div>
<div style="left:1269px;top:154px;width:1px;height:20px;background:#d9d3b6"></div>
<div style="left:1297px;top:154px;width:1px;height:20px;background:#d9d3b6"></div>
<div style="left:1325px;top:154px;width:1px;height:20px;background:#d9d3b6"></div>
<div class="t" style="left:955px;top:158px;font-size:11px;line-height:13px;color:#24200e;">Номенклатура</div>
<div class="t" style="left:1111px;top:158px;font-size:11px;line-height:13px;color:#24200e;">Количес...</div>
<div class="t" style="left:1171px;top:158px;font-size:11px;line-height:13px;color:#24200e;">Остаток</div>
<div class="t" style="left:1228px;top:158px;font-size:11px;line-height:13px;color:#24200e;">Резерв</div>
<div class="t" style="left:1274px;top:158px;font-size:11px;line-height:13px;color:#24200e;">С...</div>
<div class="t" style="left:1302px;top:158px;font-size:11px;line-height:13px;color:#24200e;">Ц...</div>
<div class="t" style="left:1330px;top:158px;font-size:11px;line-height:13px;color:#24200e;">С...</div>
<div class="t" style="left:949px;top:344px;font-size:11px;line-height:13px;color:#24200e;">%Нечт.</div>
<div class="t" style="left:949px;top:364px;font-size:11px;line-height:13px;color:#24200e;">Работа</div>
<div class="t" style="left:949px;top:384px;font-size:11px;line-height:13px;color:#24200e;">Наценка:</div>
<div class="t" style="left:949px;top:404px;font-size:11px;line-height:13px;color:#24200e;">Кол-во:</div>
<div style="left:1008px;top:341px;width:62px;height:19px;border:1px solid #f1edd6"></div>
<div style="left:1008px;top:361px;width:62px;height:18px;border:1px solid #f1edd6"></div>
<div style="left:1008px;top:381px;width:62px;height:18px;border:1px solid #f1edd6"></div>
<div style="left:997px;top:398px;width:73px;height:18px;border:1px solid #f1edd6"></div>
<div class="t" style="left:1044px;top:402px;font-size:11px;line-height:13px;color:#9a9a9a;">0,00</div>
<div class="t" style="left:1094px;top:349px;font-size:11px;line-height:13px;color:#24200e;">Итого Цена:</div>
<div style="left:1181px;top:342px;width:61px;height:19px;background:#fff;border:1px solid #aaa68c"></div>
<div class="t" style="left:1216px;top:346px;font-size:11px;line-height:13px;color:#000;">0,00</div>
<div style="left:1104px;top:370px;width:152px;height:27px;background:#ece7dd;border:1px solid #c2bca6;box-shadow:inset -1px -1px 0 #d6d0bc"></div>
<div class="t" style="left:1109px;top:378px;font-size:11px;line-height:13px;color:#3a3418;">ПЕРЕНЕСТИ В ДОКУМЕНТ</div>
<div style="left:1110px;top:428px;width:132px;height:29px;background:#ece7dd;border:1px solid #c2bca6;box-shadow:inset -1px -1px 0 #d6d0bc"></div>
<div class="t" style="left:1136px;top:437px;font-size:11px;line-height:13px;color:#3a3418;">Себестоимость</div>
<div style="left:949px;top:462px;width:132px;height:29px;background:#ede7dc"></div>
<div class="t" style="left:972px;top:471px;font-size:11px;line-height:13px;color:#8e8766;">Скомплектовать</div>
<div style="left:1086px;top:428px;width:19px;height:29px;background:#ede7dc"></div>
<svg style="left:1090px;top:437px" width="10" height="10" viewBox="0 0 10 10"><path d="M1 1 L9 9 M9 1 L1 9" stroke="#9a9a90" stroke-width="1"/></svg>
<div style="left:1086px;top:462px;width:19px;height:29px;background:#ede7dc"></div>
<svg style="left:1090px;top:471px" width="10" height="10" viewBox="0 0 10 10"><path d="M1 1 L9 9 M9 1 L1 9" stroke="#9a9a90" stroke-width="1"/></svg>
<div style="left:950px;top:507px;width:404px;height:44px;border:1px solid #f8f4ea"></div>
<div style="left:949px;top:560px;width:405px;height:86px;border:1px solid #aba58a"></div>
<div class="t" style="left:1127px;top:597px;font-size:11px;line-height:13px;color:#24200e;">Картинка</div>
<div style="left:1304px;top:658px;width:1px;height:20px;background:#cfc9b5"></div>
<div class="t" style="left:1313px;top:661px;font-size:11px;line-height:13px;color:#2e2810;">Закрыть</div>
<div style="left:0px;top:680px;width:1364px;height:1px;background:#ffffff"></div>
<div style="left:1px;top:682px;width:171px;height:20px;background:#bdb9b2"></div>
<svg style="left:4px;top:684px" width="14" height="16" viewBox="0 0 14 16"><rect x="0.5" y="0.5" width="12" height="15" rx="1" fill="#5cb050" stroke="#2f7a2a"/><rect x="3" y="2" width="8" height="12" fill="#7cc870"/><path d="M4 5 H9 M4 8 H9 M4 11 H9" stroke="#2f7a2a"/></svg>
<div class="t" style="left:21px;top:686px;font-size:11px;line-height:13px;color:#1e1e1e;">Банковские расчетные док...</div>
<div style="left:174px;top:682px;width:172px;height:20px;background:#bdb9b2"></div>
<svg style="left:177px;top:684px" width="14" height="16" viewBox="0 0 14 16"><path d="M0.5 0.5 H9 L12.5 4 V15.5 H0.5 Z" fill="#fafafa" stroke="#8898a8"/><path d="M3 5 H10 M3 7 H10 M3 9 H10 M3 11 H10 M3 13 H10" stroke="#b0bcc8"/></svg>
<div class="t" style="left:194px;top:686px;font-size:11px;line-height:13px;color:#1e1e1e;">Заказы покупателей</div>
<div style="left:347px;top:682px;width:171px;height:20px;background:#b9d1ea;border:1px solid #a8bcd0"></div>
<svg style="left:350px;top:684px" width="14" height="16" viewBox="0 0 14 16"><path d="M0.5 0.5 H9 L12.5 4 V15.5 H0.5 Z" fill="#fafafa" stroke="#7a8a98"/><rect x="3" y="6" width="2" height="7" fill="#b04848"/><rect x="5" y="8" width="2" height="5" fill="#e0c060"/><rect x="7" y="9" width="2" height="4" fill="#50a040"/></svg>
<div class="t" style="left:366px;top:686px;font-size:11px;line-height:13px;color:#1e1e1e;">Рабочее место</div>
<div style="left:0px;top:704px;width:1291px;height:19px;border:1px solid #dcd6c8"></div>
<div class="t" style="left:5px;top:708px;font-size:11px;line-height:13px;color:#1e1e1e;">Для получения подсказки нажмите F1</div>
<div style="left:1296px;top:704px;width:29px;height:19px;border:1px solid #dcd6c8"></div>
<div class="t" style="left:1300px;top:708px;font-size:11px;line-height:13px;color:#a09a80;">CAP</div>
<div style="left:1330px;top:704px;width:34px;height:19px;border:1px solid #dcd6c8"></div>
<div class="t" style="left:1334px;top:708px;font-size:11px;line-height:13px;color:#1e1e1e;">NUM</div>
<div style="left:0px;top:725px;width:1364px;height:43px;background:#d6d2cc"></div>
<div style="left:0px;top:725px;width:1364px;height:1px;background:#ffffff"></div>
<div style="left:2px;top:728px;width:51px;height:37px;background:#d6d2cc;border-top:1px solid #fff;border-left:1px solid #fff;border-right:1px solid #404040;border-bottom:1px solid #404040;box-shadow:inset -1px -1px 0 #808080"></div>
<svg style="left:5px;top:739px" width="16" height="16" viewBox="0 0 16 16"><path d="M2 3 Q5 1 8 3 L7 7 Q4 5 1 7 Z" fill="#e8602a"/><path d="M8 3 Q11 5 15 3 L14 7 Q11 9 7 7 Z" fill="#6cb030"/><path d="M0 8 Q3 6 6 8 L5 12 Q2 10 -1 12 Z" fill="#2a80e0"/><path d="M7 8 Q10 10 14 8 L13 12 Q10 14 6 12 Z" fill="#f8c020"/></svg>
<div class="t" style="left:20px;top:740px;font-size:12px;line-height:14px;color:#000;font-weight:bold;">Пуск</div>
<div style="left:212px;top:728px;width:158px;height:37px;background:#d6d2cc;border-top:1px solid #fff;border-left:1px solid #fff;border-right:1px solid #404040;border-bottom:1px solid #404040;box-shadow:inset -1px -1px 0 #808080"></div>
<svg style="left:217px;top:731px" width="30" height="30" viewBox="0 0 30 30"><defs><radialGradient id="lg" cx="0.4" cy="0.3" r="0.75"><stop offset="0" stop-color="#fff3b0"/><stop offset="0.6" stop-color="#f8c830"/><stop offset="1" stop-color="#e89a10"/></radialGradient></defs><circle cx="15" cy="15" r="14" fill="url(#lg)"/><path d="M5 12 L8.5 10 V21" stroke="#d01808" stroke-width="2.8" fill="none"/><path d="M21 11 Q19 8.5 16 9 Q11.5 10 12 15 Q12.5 19 16 19.5" stroke="#d01808" stroke-width="2.6" fill="none"/><path d="M15 19 H27" stroke="#d01808" stroke-width="2.8"/><path d="M15.5 14.5 H22" stroke="#fff0a0" stroke-width="1.2"/></svg>
<div class="t" style="left:251px;top:741px;font-size:11px;line-height:13px;color:#000;letter-spacing:0.25px">"Управление торгов...</div>
<div style="left:371px;top:728px;width:161px;height:37px;background:#fcfcfc;border-top:1px solid #404040;border-left:1px solid #404040;border-right:1px solid #fff;border-bottom:1px solid #fff;box-shadow:inset 1px 1px 0 #808080"></div>
<svg style="left:377px;top:732px" width="30" height="30" viewBox="0 0 30 30"><circle cx="15" cy="15" r="14" fill="url(#lg)"/><path d="M5 12 L8.5 10 V21" stroke="#d01808" stroke-width="2.8" fill="none"/><path d="M21 11 Q19 8.5 16 9 Q11.5 10 12 15 Q12.5 19 16 19.5" stroke="#d01808" stroke-width="2.6" fill="none"/><path d="M15 19 H27" stroke="#d01808" stroke-width="2.8"/><path d="M15.5 14.5 H22" stroke="#fff0a0" stroke-width="1.2"/></svg>
<div class="t" style="left:412px;top:741px;font-size:12px;line-height:14px;color:#000;font-weight:bold;">"Управление торг...</div>
<div style="left:533px;top:728px;width:161px;height:37px;background:#d6d2cc;border-top:1px solid #fff;border-left:1px solid #fff;border-right:1px solid #404040;border-bottom:1px solid #404040;box-shadow:inset -1px -1px 0 #808080"></div>
<div class="t" style="left:574px;top:741px;font-size:11px;line-height:13px;color:#000;letter-spacing:0.25px">отчеты-рабочее мес...</div>
<div class="t" style="left:1130px;top:739px;font-size:11px;line-height:13px;color:#000;">RU</div>
<div style="left:1149px;top:733px;width:1px;height:23px;background:#808080;border-right:1px solid #fff;width:2px"></div>
<div style="left:1177px;top:733px;width:2px;height:23px;background:#808080;border-right:1px solid #fff"></div>
<div style="left:1180px;top:728px;width:182px;height:37px;border-top:1px solid #808080;border-left:1px solid #808080;border-right:1px solid #fff;border-bottom:1px solid #fff"></div>
<div class="t" style="left:1295px;top:733px;font-size:11px;line-height:13px;color:#000;">15:14</div>
<div class="t" style="left:1281px;top:749px;font-size:11px;line-height:13px;color:#000;">18.02.2019</div>
<svg style="left:73px;top:731px" width="30" height="32" viewBox="0 0 30 32"><defs><linearGradient id="srv" x1="0" y1="0" x2="1" y2="0"><stop offset="0" stop-color="#9aa4ae"/><stop offset="1" stop-color="#e8ecf0"/></linearGradient><linearGradient id="box" x1="0" y1="0" x2="0" y2="1"><stop offset="0" stop-color="#c8d0d8"/><stop offset="1" stop-color="#6a7a88"/></linearGradient></defs><path d="M1 3 L6 0 H20 V26 L15 29 H1 Z" fill="url(#srv)" stroke="#5a6470" stroke-width="0.8"/><path d="M3 6 H13 M3 9 H13 M3 12 H13 M3 15 H13" stroke="#5a6470" stroke-width="0.9"/><path d="M10 17 H28 V31 H10 Z" fill="url(#box)" stroke="#4a5460" stroke-width="0.8"/><path d="M15 17 Q15 12 19 12 Q23 12 23 17" fill="none" stroke="#3a4450" stroke-width="1.6"/><circle cx="14" cy="23" r="1" fill="#3a4450"/><circle cx="24" cy="23" r="1" fill="#3a4450"/></svg>
<svg style="left:122px;top:733px" width="28" height="26" viewBox="0 0 28 26"><defs><linearGradient id="ps" x1="0" y1="0" x2="1" y2="1"><stop offset="0" stop-color="#6ab0f0"/><stop offset="1" stop-color="#1a5ab0"/></linearGradient></defs><path d="M6 1 H27 L22 25 H1 Z" fill="url(#ps)" stroke="#1a4a90" stroke-width="0.8"/><path d="M8 7 L15 12 L6 18" fill="none" stroke="#fff" stroke-width="2.4"/><path d="M12 19 H18" stroke="#fff" stroke-width="2"/></svg>
<svg style="left:170px;top:733px" width="32" height="30" viewBox="0 0 32 30"><defs><linearGradient id="fo" x1="0" y1="0" x2="0" y2="1"><stop offset="0" stop-color="#fff4c0"/><stop offset="1" stop-color="#e8c050"/></linearGradient></defs><path d="M1 4 H11 L13 2 H31 V27 H1 Z" fill="#e8c868" stroke="#b89030" stroke-width="0.8"/><rect x="4" y="3" width="5" height="3" fill="#60b040"/><rect x="15" y="3" width="5" height="3" fill="#e04040"/><path d="M1 8 H31 V27 H1 Z" fill="url(#fo)" stroke="#b89030" stroke-width="0.8"/><path d="M8 29 V20 H24 V29 M6 20 H26 V17 H6 Z" fill="#8ac0f0" stroke="#3a78c0" stroke-width="1.2"/></svg>
<svg style="left:537px;top:731px" width="33" height="32" viewBox="0 0 33 32"><path d="M3 20 Q0 9 12 6 Q26 3 26 15 Q26 22 19 21 Q15 20 16 25 Q16 30 9 29 Q4 27 3 20 Z" fill="#e8f0f8" stroke="#6a8aa8" stroke-width="1"/><circle cx="8" cy="18" r="2.6" fill="#e04040"/><circle cx="11" cy="11" r="2.6" fill="#40a040"/><circle cx="18" cy="10" r="2.6" fill="#e0c030"/><circle cx="9" cy="24" r="2.2" fill="#e8f0f8" stroke="#6a8aa8" stroke-width="0.8"/><circle cx="16" cy="15" r="2.2" fill="#4080e0"/><path d="M32 1 L18 22" stroke="#c07020" stroke-width="2.8"/><path d="M19 19 L16 25 L21 21 Z" fill="#603010"/></svg>
<svg style="left:1157px;top:738px" width="17" height="13" viewBox="0 0 17 13"><path d="M9 4 Q9 1 13 1 H16" fill="none" stroke="#909090"/><rect x="0.5" y="4.5" width="16" height="8" rx="1" fill="#e0e0e0" stroke="#909090"/><path d="M2.5 7 H14.5 M2.5 9 H14.5 M4 11 H13" stroke="#a0a0a0" stroke-dasharray="1 1"/></svg>
<svg style="left:1186px;top:740px" width="7" height="9" viewBox="0 0 7 9"><path d="M0.5 4 L3.5 1 L6.5 4 M0.5 8 L3.5 5 L6.5 8" fill="none" stroke="#000" stroke-width="1.5"/></svg>
<svg style="left:1202px;top:738px" width="17" height="16" viewBox="0 0 17 16"><path d="M1.5 1 V16" stroke="#808080" stroke-width="1.6"/><path d="M2 1.5 Q6 0.5 9 2 Q12 3 16 2 L14 7 Q16 9 16 9 Q12 10 9 8.5 Q6 7 2 8.5 Z" fill="#f8f8f8" stroke="#909090" stroke-width="0.9"/></svg>
<svg style="left:1227px;top:738px" width="17" height="17" viewBox="0 0 17 17"><rect x="4.5" y="3.5" width="12" height="10" fill="#d3d3d3" stroke="#808080"/><rect x="6" y="5" width="9" height="7" fill="#a8a8a8"/><path d="M7 16 H14" stroke="#808080" stroke-width="1.2"/><rect x="0.5" y="0.5" width="5" height="15" fill="#f0f0f0" stroke="#808080"/><path d="M2 3 V8 M4 3 V8" stroke="#606060"/></svg>
<svg style="left:1250px;top:738px" width="18" height="17" viewBox="0 0 18 17"><path d="M1 5 H4 L9 1 V15 L4 11 H1 Z" fill="#e8e8e8" stroke="#808080"/><circle cx="12.5" cy="11.5" r="4.5" fill="#f0a0a0" stroke="#d02020" stroke-width="1.2"/><path d="M10.5 9.5 L14.5 13.5 M14.5 9.5 L10.5 13.5" stroke="#d02020" stroke-width="1.4"/></svg>
<svg style="left:1344px;top:741px" width="15" height="12" viewBox="0 0 15 12"><rect x="0.5" y="0.5" width="14" height="11" fill="#2060c0" stroke="#203a70"/><path d="M1 8 Q6 5 14 9 V11 H1 Z" fill="#60a0e0"/><rect x="1" y="1" width="13" height="2" fill="#6090d0"/></svg>
</body></html>
